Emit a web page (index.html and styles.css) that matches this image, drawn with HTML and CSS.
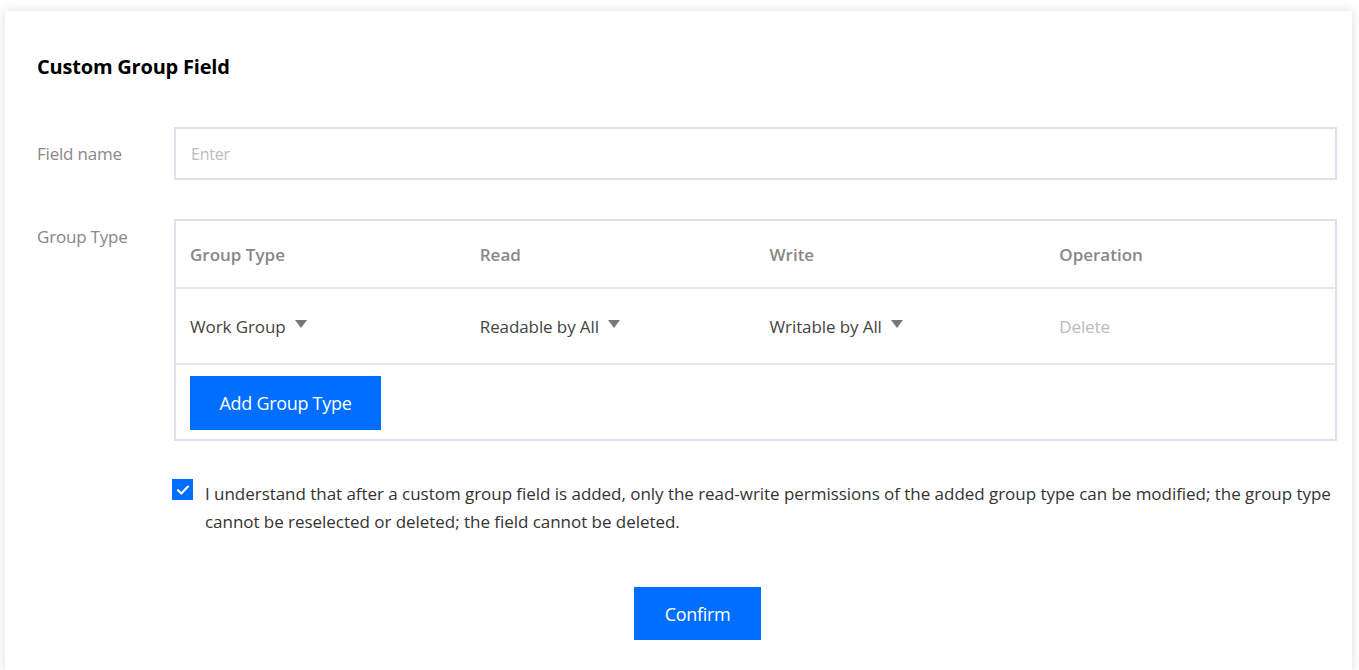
FILE: index.html
```html
<!DOCTYPE html>
<html lang="en">
<head>
<meta charset="utf-8">
<title>Custom Group Field</title>
<link rel="stylesheet" href="styles.css">
</head>
<body>
<div class="dialog">
  <h2 class="dialog-title">Custom Group Field</h2>

  <div class="form-row form-row-center">
    <label class="form-label">Field name</label>
    <div class="form-control">
      <input class="text-input" type="text" placeholder="Enter">
    </div>
  </div>

  <div class="form-row">
    <label class="form-label form-label-top">Group Type</label>
    <div class="form-control">
      <div class="group-table">
        <div class="table-row table-head">
          <div class="cell">Group Type</div>
          <div class="cell">Read</div>
          <div class="cell">Write</div>
          <div class="cell">Operation</div>
        </div>
        <div class="table-row table-body">
          <div class="cell"><span class="select">Work Group <i class="caret"></i></span></div>
          <div class="cell"><span class="select">Readable by All <i class="caret"></i></span></div>
          <div class="cell"><span class="select">Writable by All <i class="caret"></i></span></div>
          <div class="cell"><span class="link-disabled">Delete</span></div>
        </div>
        <div class="table-foot">
          <button class="btn btn-primary btn-add" type="button">Add Group Type</button>
        </div>
      </div>
    </div>
  </div>

  <div class="agree-row">
    <span class="checkbox checked">
      <svg viewBox="0 0 20 20" width="20" height="20"><path d="M5 10.2l3.3 3.3L15 6.6" fill="none" stroke="#fff" stroke-width="2.2" stroke-linecap="round" stroke-linejoin="round"/></svg>
    </span>
    <p class="agree-text">I understand that after a custom group field is added, only the read-write permissions of the added group type can be modified; the group type cannot be reselected or deleted; the field cannot be deleted.</p>
  </div>

  <div class="dialog-footer">
    <button class="btn btn-primary btn-confirm" type="button">Confirm</button>
  </div>
</div>
</body>
</html>
```

FILE: styles.css
```css
html, body {
  margin: 0;
  padding: 0;
  background: #fff;
}

body {
  font-family: "Open Sans", "Noto Sans", "Liberation Sans", sans-serif;
  color: #333;
  overflow: hidden;
}

.dialog {
  margin: 11px 0 0 5px;
  width: 1347px;
  height: 659px;
  background: #fff;
  box-shadow: 0 0 10px rgba(0, 0, 0, 0.14);
  padding: 0 15px 0 32px;
  box-sizing: border-box;
}

.dialog-title {
  margin: 0;
  padding-top: 41px;
  font-size: 20px;
  line-height: 30px;
  font-weight: 700;
  color: #000;
  letter-spacing: -0.2px;
}

.form-row {
  display: flex;
  align-items: flex-start;
}

.form-row-center {
  margin-top: 45px;
  align-items: center;
}

.form-row + .form-row {
  margin-top: 39px;
}

.form-label {
  width: 137px;
  flex: none;
  font-size: 17px;
  color: #888;
  letter-spacing: -0.2px;
}

.form-label-top {
  padding-top: 6px;
}

.form-control {
  flex: 1;
}

.text-input {
  display: block;
  width: 100%;
  height: 53px;
  box-sizing: border-box;
  border: 2px solid #dde1ea;
  padding: 0 15px;
  font: inherit;
  font-size: 16px;
  color: #333;
  outline: none;
  letter-spacing: -0.2px;
}

.text-input::placeholder {
  color: #bbb;
}

.group-table {
  border: 2px solid #dde1ea;
}

.table-row {
  display: grid;
  grid-template-columns: repeat(4, 1fr);
  align-items: center;
  border-bottom: 2px solid #e4e7ee;
}

.table-head {
  height: 66px;
  font-weight: 600;
  color: #888;
  font-size: 17px;
  letter-spacing: 0;
}

.table-body {
  height: 74px;
  font-size: 17px;
  color: #444;
  letter-spacing: -0.1px;
}

.cell {
  padding: 0 14px;
}

.select {
  display: inline-flex;
  align-items: center;
  gap: 9px;
}

.caret {
  width: 0;
  height: 0;
  border-left: 6px solid transparent;
  border-right: 6px solid transparent;
  border-top: 8px solid #777;
  margin-top: -4px;
}

.link-disabled {
  color: #bbb;
}

.table-foot {
  padding: 11px 14px 9px;
}

.btn {
  border: 0;
  font: inherit;
  cursor: pointer;
}

.btn-primary {
  background: #006eff;
  color: #fff;
  font-size: 18px;
  letter-spacing: -0.3px;
}

.btn-add {
  display: block;
  width: 191px;
  height: 54px;
}

.agree-row {
  display: flex;
  align-items: flex-start;
  gap: 12px;
  margin: 39px 0 0 135px;
}

.checkbox {
  flex: none;
  width: 21px;
  height: 21px;
  margin-top: -1px;
  background: #006eff;
  display: flex;
  align-items: center;
  justify-content: center;
}

.agree-text {
  margin: 0;
  font-size: 17px;
  line-height: 28px;
  color: #333;
  letter-spacing: -0.04px;
}

.dialog-footer {
  display: flex;
  padding-left: 597px;
  margin-top: 51px;
}

.btn-confirm {
  width: 127px;
  height: 53px;
}
```
